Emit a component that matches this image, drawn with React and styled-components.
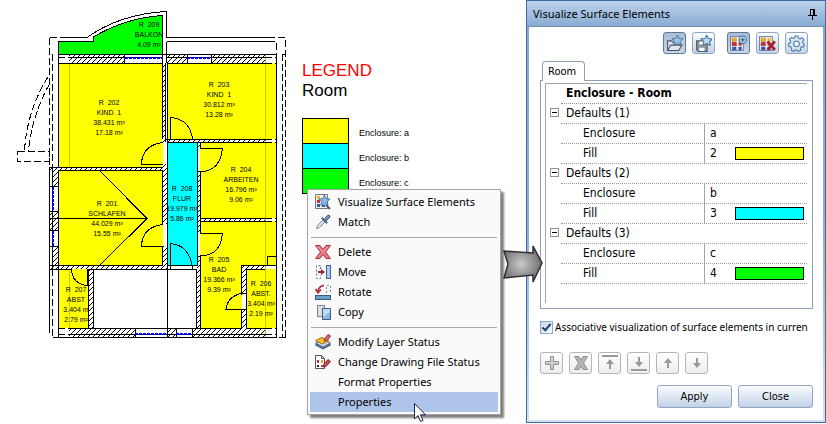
import React, { useState } from "react";
import styled, { createGlobalStyle, css } from "styled-components";

const GlobalStyle = createGlobalStyle`
  *, *::before, *::after { box-sizing: border-box; }
  body { margin: 0; background: #fff; color: #000; font-family: "Noto Sans", "Open Sans", sans-serif; font-size: 11px; }
  button { font: inherit; color: inherit; padding: 0; margin: 0; }
`;

const sans = '"Liberation Sans", Arial, sans-serif';

/* ---------- page ---------- */

const Page = styled.main`
  position: relative;
  display: grid;
  grid-template-columns: 1fr 300px;
  align-items: start;
`;

const Workspace = styled.section`
  position: relative;
  display: flex;
  align-items: flex-start;
  gap: 2px;
`;

/* ---------- floor plan ---------- */

const PlanSvg = styled.svg`
  flex: none;
  display: block;
`;

const RoomText = styled.text`
  font-family: ${sans};
  font-size: 7px;
  text-anchor: middle;
  fill: #000;
`;

const rooms = [
  { x: 149, y: 27, lines: ["R  209", "BALKON", "4.09 m²"] },
  { x: 109, y: 105, lines: ["R  202", "KIND  1", "38.431 m³", "17.18 m²"] },
  { x: 219, y: 87, lines: ["R  203", "KIND  1", "30.812 m³", "13.28 m²"] },
  { x: 107, y: 206, lines: ["R  201", "SCHLAFEN", "44.029 m³", "15.55 m²"] },
  { x: 182, y: 191, lines: ["R  208", "FLUR", "19.979 m³", "5.86 m²"] },
  { x: 241, y: 172, lines: ["R  204", "ARBEITEN", "16.796 m³", "9.06 m²"] },
  { x: 219, y: 262, lines: ["R  205", "BAD", "19.366 m³", "9.39 m²"] },
  { x: 261, y: 286, lines: ["R  206", "ABST.", "3.404 m³", "2.19 m²"] },
  { x: 76, y: 292, lines: ["R  207", "ABST", "3.404 m", "2.79 m²"] },
];

/* x, y, width, height of the hatched wall pieces */
const walls = [
  [69, 54, 56, 9], [167, 54, 20, 9], [211, 54, 54, 9],
  [49, 167, 114, 3], [162, 63, 4, 79], [166, 139, 99, 3],
  [52, 167, 6, 19], [49, 211, 9, 19], [52, 246, 6, 22],
  [49, 265, 118, 4], [162, 164, 5, 60], [162, 246, 5, 20],
  [197, 142, 3, 186], [200, 218, 65, 3], [88, 269, 5, 59],
  [69, 328, 66, 9], [167, 328, 9, 9], [192, 328, 73, 9],
  [241, 265, 24, 4], [241, 269, 5, 24], [241, 309, 5, 19],
];

function FloorPlan() {
  return (
    <PlanSvg width="300" height="350" viewBox="0 0 300 350" role="img" aria-label="Floor plan">
      <defs>
        <pattern id="hatch" width="5" height="5" patternUnits="userSpaceOnUse">
          <rect width="5" height="5" fill="#fff" />
          <path d="M-1 6L6-1M-1 1L1-1M4 6L6 4" stroke="#000" />
        </pattern>
      </defs>
      <g shapeRendering="crispEdges">
        <path fill="#0f0" d="M58 54V41H94V37Q125 18 163 15V54Z" />
        <path fill="#ff0" d="M58 63H163V167H58ZM167 63H277V139H167ZM200 142H277V218H200ZM58 170H163V265H58ZM200 221H277V265H241V328H200ZM58 269H88V328H58ZM246 269H277V328H246Z" />
        <path fill="#0ff" d="M167 142H198V265H167Z" />
        <path stroke="#c9c900" fill="none" d="M69.500 54V167M69.500 269V337M265.500 54V337" />
        {walls.map(([x, y, w, h]) => (
          <rect key={`${x}-${y}`} x={x} y={y} width={w} height={h} fill="url(#hatch)" />
        ))}
        <path fill="#fff" d="M125 55H163V63H125ZM187 55H211V63H187ZM59 55H69V63H59ZM266 55H276V63H266ZM135 329H167V337H135ZM176 329H192V337H176ZM49 186H58V211H49ZM49 230H58V246H49Z" />

        <g fill="none" stroke="#000">
          {/* outer walls */}
          <path d="M58.500 41V167M58.500 170V337M276.500 54V337M58 54.500H277M58 63.500H163M167 63.500H265M58 337.500H277M69 328.500H242M246 328.500H265M125 57.500H163M187 57.500H211M69 57.500H125M167 57.500H187M211 57.500H265M69 334.500H265" />
          {/* balcony */}
          <path d="M65 37.500H87Q120 14 166.500 11.500V37.500H269M58 41.500H93.500V37Q125 18 162.500 15.500V63M166.500 41.500H268M166.500 41.500V63" />
          {/* dashed roof edge */}
          <path strokeDasharray="7 3" d="M49.500 37.500H65M49.500 37.500V167M52.500 54V167M49.500 328V269M52.500 269V337M49.500 328V333M52.500 337.500H58M268 37.500H285.500V337M282.500 54V337M282.500 54.500H285M268 41.500H276.500V54M285.500 337.500H277M58 57.500H69M58 63.500H69M265 57.500H276M265 63.500H276M265 139.500H276M265 142.500H276M265 218.500H276M265 221.500H276M58 328.500H69M58 334.500H69M265 328.500H276M265 334.500H276" />
          <path strokeDasharray="7 3" d="M48 77Q27 110 24.500 151M49.500 84Q32 115 28.500 151M17.500 151.500H49V161.500H17.500Z" />
          {/* inner walls */}
          <path d="M49 167.500H163M58 170.500H163M49.500 167V328M52.500 167V269M49 265.500H163M49 269.500H167M162.500 63V139M165.500 63V142M167.500 63V337M166 139.500H265M167 142.500H265M162.500 170V265M197.500 142V265M196.500 269V328M200.500 142V328M200 218.500H265M200 221.500H265M167 265.500H198M167 269.500H197M88.500 269V328M93.500 269V328M241.500 265V328M246.500 269V328M241 265.500H276M246 269.500H265M135.500 328V337M176.500 328V337M192.500 328V337M124.500 54V63M187.500 54V63M211.500 54V63M49 186.500H58M49 211.500H58M49 230.500H58M49 246.500H58M267.500 265V256.500H276" />
          <path d="M49 218.500H147L99 170M147 218.500L99 266" />
          {/* doors */}
          <path fill="#ff0" d="M163 142.500Q142 145 141.500 164.500H163M163 224.500Q142 227 141.500 246.500H163M170.500 139V117.500Q190 119 192.500 139M200 148.500H222.500Q220 170 203 171.500H200M200 233.500H222.500Q220 255 203 255.500H200M71.500 269Q72 284 87.500 285.500V269M241 293.500Q227 297 226 309.500H246" />
          <path d="M170.500 269V243.500Q190 245 192.500 269" />
          <path d="M200 256.500H197M197 171.500H200M246 293.500H241" />
        </g>
        <path fill="#fff" d="M242 294H246V309H242ZM198 149H200V171H198ZM198 234H200V256H198ZM163 225H167V246H163Z" />
        <path fill="none" stroke="#00f" strokeWidth="2" strokeDasharray="3 1" d="M125 58H163M187 58H211M135 334H167M176 334H192M53 187V211M53 231V246" />
      </g>
      {rooms.map((room) =>
        room.lines.map((line, i) => (
          <RoomText key={room.lines[0] + i} x={room.x} y={room.y + i * 10} xmlSpace="preserve">
            {line}
          </RoomText>
        ))
      )}
    </PlanSvg>
  );
}

/* ---------- legend ---------- */

const LegendBox = styled.section`
  padding-top: 61px;
  font-family: ${sans};
`;

const LegendHeading = styled.h2`
  margin: 0;
  font-size: 17px;
  line-height: 20px;
  font-weight: 400;
  color: ${(p) => p.$color || "#000"};
`;

const LegendList = styled.ul`
  margin: 17px 0 0;
  padding: 0;
  list-style: none;
`;

const LegendItem = styled.li`
  display: flex;
  align-items: center;
  gap: 10px;
  height: 25px;
  font-size: 9px;
  line-height: 25px;
  white-space: nowrap;
`;

const LegendSwatch = styled.span`
  width: 47px;
  height: 26px;
  flex: none;
  align-self: flex-start;
  border: 1px solid #000;
  background: ${(p) => p.$color};
`;

const LegendLabel = styled.span`
  padding-top: 5px;
`;

/* ---------- context menu ---------- */

const Menu = styled.div`
  position: absolute;
  left: 307px;
  top: 189px;
  width: 194px;
  padding: 2px;
  background: #fafafa;
  border: 1px solid #a3a3a3;
  box-shadow: 3px 3px 2px rgba(0, 0, 0, 0.5);
`;

const MenuItem = styled.button`
  display: flex;
  align-items: center;
  gap: 7px;
  width: 100%;
  height: 20px;
  padding-left: 5px;
  border: 0;
  background: ${(p) => (p.$active ? "#aec4ea" : "transparent")};
  line-height: 20px;
  text-align: left;
  white-space: nowrap;
`;

const IconSlot = styled.span`
  display: flex;
  width: 16px;
  height: 16px;
  flex: none;
`;

const MenuRule = styled.hr`
  height: 1px;
  margin: 5px 1px 4px;
  border: 0;
  background: #aaa;
`;

const Cursor = styled.svg`
  position: absolute;
  left: 413px;
  top: 402px;
`;

const FlowArrow = styled.svg`
  position: absolute;
  right: 282px;
  top: 242px;
`;

/* ---------- icons ---------- */

const Icon = ({ children, size = 16 }) => (
  <svg width={size} height={size} viewBox="0 0 16 16" fill="none" aria-hidden="true">
    {children}
  </svg>
);

const STAR = "M8 0L10 4.500L15 5L11.500 8.500L12.500 13L8 10.800L3.500 13L4.500 8.500L1 5L6 4.500Z";
const Swatches = () => (
  <>
    <rect x=".5" y="1.500" width="12" height="13" fill="#f6f8fc" stroke="#7283a0" />
    <path fill="#f9b61b" stroke="#a16c21" strokeWidth=".5" d="M2 3H6V6H2Z" />
    <path fill="#d7263d" stroke="#82172a" strokeWidth=".5" d="M2 7H6V10H2Z" />
    <path fill="#38579f" d="M2 11H6V14H2ZM8 11H11V14H8Z" />
    <path fill="#f9b61b" d="M8 3H11V6H8Z" />
    <path fill="#bd2636" d="M8 7H11V10H8Z" />
  </>
);

const VisualizeIcon = () => (
  <Icon>
    <path d="M.5 .5H12.500V14.500H.5Z" fill="#eef2f9" stroke="#6b7688" />
    <path fill="#f9b61b" d="M2 2H5V5H2Z" />
    <path fill="#d7263d" d="M2 6H5V9H2Z" />
    <path fill="#38579f" d="M2 10H5V13H2ZM7 11H10V13H7Z" />
    <path d="M11 11L15 15" stroke="#555c69" strokeWidth="2" />
    <g transform="translate(3 1) scale(.8)"><path d={STAR} fill="#8db9e4" stroke="#3c638f" /></g>
  </Icon>
);
const MatchIcon = () => (
  <Icon>
    <path d="M1.500 14.500L2.500 11.500L8 6L10 8L4.500 13.500Z" fill="#dce6ee" stroke="#7e8c9b" />
    <path d="M7.500 3.500L12.500 8.500L11.500 9.500L6.500 4.500Z" fill="#4f7095" stroke="#2f4e70" strokeWidth=".7" />
    <path d="M10 4.500L12.500 1.500Q15 .5 15 3L11.500 6.500Z" fill="#7d9fc6" stroke="#2f4e70" />
  </Icon>
);
const DeleteIcon = () => (
  <Icon>
    <path d="M.5 1.500H5L8 5.500L11 1.500H15.500L10.500 8L15.500 14.500H11L8 10.500L5 14.500H.5L5.500 8Z" fill="#ea7a83" stroke="#aa303b" />
    <path d="M3 3L8 8L13 3" stroke="#f5a8ad" />
  </Icon>
);
const MoveIcon = () => (
  <Icon>
    <path d="M5.500 1.500H1.500V14.500H5.500V11M5.500 5V1.500" stroke="#707070" strokeDasharray="2 2" />
    <path d="M3 7H6V5L10 8L6 11V9H3Z" fill="#a51f30" />
    <rect x="11.500" y="1.500" width="4" height="13" fill="#a9cdf0" stroke="#3f638c" />
  </Icon>
);
const RotateIcon = () => (
  <Icon>
    <path d="M11.500 9V1.500H15.500V10" stroke="#888" strokeDasharray="2 2" />
    <path d="M9 1.500Q4 2 3 7M.5 5L3 9L6 5.500" stroke="#b32636" strokeWidth="1.600" />
    <rect x=".5" y="11.500" width="15" height="4" fill="#6d9dcc" stroke="#365b84" />
  </Icon>
);
const CopyIcon = () => (
  <Icon>
    <rect x="2.500" y="1.500" width="7" height="11" fill="#dedede" stroke="#858585" />
    <path d="M7.500 4.500H15.500V15.500H7.500Z" fill="#8cb4dc" stroke="#365f8d" />
    <path d="M8 5H15V8L8 13Z" fill="#c2dbf2" />
  </Icon>
);
const LayersIcon = () => (
  <Icon>
    <path d="M.5 11L8 8L15.500 11L8 15Z" fill="#5e7ea3" stroke="#38536f" />
    <path d="M.5 9L8 6L15.500 9L8 13Z" fill="#d0dceb" stroke="#536d89" />
    <path d="M.5 6.500L7 3.500L14 6.500L7.500 10Z" fill="#fdbd28" stroke="#a96f17" />
    <path d="M9.500 5L13 .5L15.500 2L12 6.500L9 7Z" fill="#df6876" stroke="#912b3b" />
  </Icon>
);
const FileStatusIcon = () => (
  <Icon>
    <path d="M.5 1.500H6.500L9.500 4.500V14.500H.5Z" fill="#fff" stroke="#555" />
    <path d="M6.500 1.500V4.500H9.500" stroke="#555" />
    <path fill="#c93142" d="M2 6H4V9H2Z" /><path fill="#222" d="M2 11H4V13H2Z" /><path fill="#f6a52a" d="M6 6H8V9H6Z" /><path fill="#cf3e32" d="M6 11H8V13H6Z" />
    <path d="M8 13L9 10L13 5.500L15.500 7.500L11.500 12Z" fill="#cc4654" stroke="#872532" />
  </Icon>
);

const OpenFavoriteIcon = () => (
  <Icon size={17}>
    <path d="M1.500 14V5.500H5L6.500 7H12V9" fill="#d8e3ee" stroke="#485568" />
    <g transform="translate(5 0) scale(.72)"><path d={STAR} fill="#9dc6eb" stroke="#45729f" strokeWidth="1.300" /></g>
    <path d="M1.500 14.500L4.500 9.500H15L12 14.500Z" fill="#e2e6e9" stroke="#485568" />
  </Icon>
);
const SaveFavoriteIcon = () => (
  <Icon size={17}>
    <path d="M1.500 5.500H11.500V15.500H3L1.500 14Z" fill="#8a8f98" stroke="#555c67" />
    <path d="M4 6H9V9H4ZM4 12H9V15H4Z" fill="#f5f7fa" />
    <g transform="translate(5 0) scale(.75)"><path d={STAR} fill="#b9dcf8" stroke="#46729d" strokeWidth="1.300" /></g>
  </Icon>
);
const AddRowsIcon = () => (
  <Icon size={17}>
    <Swatches />
    <circle cx="12" cy="4.500" r="3.500" fill="#bad5ef" stroke="#406b99" />
    <path d="M12 2.500V6.500M10 4.500H14" stroke="#31577d" />
  </Icon>
);
const RemoveRowsIcon = () => (
  <Icon size={17}>
    <Swatches />
    <path d="M8 6L15 14M15 6L8 14" stroke="#a81f31" strokeWidth="2.600" />
  </Icon>
);
const GearIcon = () => (
  <Icon size={17}>
    <path d="M6.700 1H9.300L9.800 3L11.400 3.700L13.200 2.600L15 4.700L13.700 6.200L14 7.800L15.500 8.700L14.600 11.200L12.700 11.200L11.600 12.500L11.900 14.500L9.500 15.400L8.300 13.800H6.800L5.500 15.300L3.200 14.200L3.500 12.300L2.500 11L.6 10.700L.5 8L2.200 7.300L2.500 5.700L1.400 4.100L3.200 2.200L5 3.100L6.300 2.700Z" fill="#d5e7f7" stroke="#53789f" />
    <circle cx="8" cy="8.300" r="2.700" fill="#f5f9fc" stroke="#53789f" />
  </Icon>
);

const gray = { fill: "#cfcfcf", stroke: "#929292" };
const editIcons = [
  ["Add", <path key="a" d="M6.500 1.500H9.500V6.500H14.500V9.500H9.500V14.500H6.500V9.500H1.500V6.500H6.500Z" {...gray} />],
  ["Remove", <path key="b" d="M1.500 1.500H6L8 5L10 1.500H14.500L10.500 8L14.500 14.500H10L8 11L6 14.500H1.500L5.500 8Z" fill="#b5b5b5" stroke="#929292" />],
  ["Move to top", <path key="c" d="M0 0H16V2H0ZM8 4L12 9H9V14H7V9H4Z" fill="#999" />],
  ["Move to bottom", <path key="d" d="M0 14H16V16H0ZM7 2H9V7H12L8 12L4 7H7Z" fill="#999" />],
  ["Move up", <path key="e" d="M8 3L12 8H9V13H7V8H4Z" fill="#999" />],
  ["Move down", <path key="f" d="M7 3H9V8H12L8 13L4 8H7Z" fill="#999" />],
];

/* ---------- panel ---------- */

const Panel = styled.aside`
  border: 1px solid #3f6ba3;
  padding: 0 2px 2px;
  background: linear-gradient(#87a9d1, #8fb0d8 55%, #d3e1f1);
`;

const TitleBar = styled.header`
  display: flex;
  align-items: center;
  justify-content: space-between;
  height: 26px;
  margin: 0 -2px;
  padding: 0 8px 0 6px;
  border-bottom: 1px solid #7390b3;
  background: linear-gradient(#bdd3ec, #89abd2);
`;

const Title = styled.h1`
  margin: 0;
  font-size: 11px;
  line-height: 20px;
  font-weight: 400;
`;

const PinButton = styled.button`
  display: flex;
  border: 0;
  background: none;
`;

const PanelBody = styled.div`
  padding: 5px 10px 12px 11px;
  background: #fff;
  font-family: "DejaVu Sans Condensed", "Noto Sans", sans-serif;
  font-size: 12px;
`;

const ButtonRow = styled.div`
  display: flex;
  justify-content: ${(p) => (p.$end ? "flex-end" : "flex-start")};
  gap: 6px;
  padding-right: ${(p) => p.$inset || 0}px;
`;

const ButtonGroup = styled.div`
  display: flex;
  gap: 6px;
  margin-left: 6px;
`;

const controlLook = css`
  border: 1px solid #8fa6c4;
  border-radius: 3px;
  background: linear-gradient(#fbfcfe, #dfe8f3 50%, #c1d1e5);
`;

const ToolButton = styled.button`
  display: flex;
  align-items: center;
  justify-content: center;
  width: 23px;
  height: 22px;
  ${controlLook}
  ${(p) => p.$pressed && css`
    border-color: #5e7899;
    background: linear-gradient(#a9bdd5, #c7d7ea);
  `}
  &:disabled {
    border-color: #b5b5b5;
    background: linear-gradient(#fff, #ededed);
  }
`;

const Tabs = styled.div`
  display: flex;
  margin: 7px 0 -1px 2px;
`;

const Tab = styled.button`
  position: relative;
  height: 20px;
  padding: 0 8px 0 5px;
  border: 1px solid #8d9fb8;
  border-bottom: 0;
  border-radius: 4px 4px 0 0;
  background: #fff;
  font-size: 11px;
  line-height: 18px;
`;

const TabPage = styled.div`
  padding: 2px 5px 5px 4px;
  border: 1px solid #8d9fb8;
`;

const Tree = styled.div`
  display: flow-root;
  padding: 0 0 19px 4px;
  border: solid #a5a5a5;
  border-width: 1px 0 0 1px;
`;

const TreeRow = styled.div`
  display: grid;
  grid-template-columns: 11px 1fr;
  height: 20px;
  line-height: 19px;
`;

const TreeHeading = styled.h2`
  margin: 0;
  padding-left: 5px;
  border-bottom: 1px dotted #999;
  font-size: 12px;
  line-height: 19px;
  font-weight: ${(p) => (p.$strong ? 700 : 400)};
`;

const Expander = styled.button`
  display: flex;
  align-items: center;
  justify-content: center;
  width: 9px;
  height: 9px;
  margin-top: 4px;
  border: 1px solid #929292;
  background: #fff;

  &::before {
    content: "";
    width: 5px;
    height: 1px;
    background: #000;
  }
  &[aria-expanded="false"] {
    box-shadow: inset 0 0 0 1px #ddd;
  }
`;

const Property = styled.div`
  display: grid;
  grid-template-columns: 144px 1fr;
  grid-column: 2;
  border-bottom: 1px dotted #999;
`;

const PropertyName = styled.span`
  padding-left: 22px;
  border-right: 1px solid #a5a5a5;
`;

const PropertyValue = styled.span`
  display: flex;
  align-items: center;
  justify-content: space-between;
  padding: 0 3px 0 5px;
`;

const FillSwatch = styled.span`
  width: 69px;
  height: 13px;
  border: 1px solid #000;
  background: ${(p) => p.$color};
`;

const CheckLabel = styled.label`
  display: flex;
  align-items: center;
  gap: 2px;
  height: 20px;
  margin: 8px 0 15px;
  font-family: "Noto Sans", sans-serif;
  font-size: 10px;
  white-space: nowrap;
`;

const CheckInput = styled.input`
  appearance: none;
  display: flex;
  justify-content: center;
  flex: none;
  width: 13px;
  height: 13px;
  margin: 0;
  border: 1px solid #8fa9c8;
  background: linear-gradient(135deg, #c5d8ee, #f5f9fd);

  &:checked::before {
    content: "";
    width: 5px;
    height: 9px;
    border: solid #1e4273;
    border-width: 0 2px 2px 0;
    transform: rotate(40deg);
  }
`;

const Actions = styled.div`
  display: flex;
  justify-content: flex-end;
  gap: 6px;
  margin-top: 11px;
`;

const PushButton = styled.button`
  width: 75px;
  height: 23px;
  ${controlLook}
  font-size: 11px;
`;

const groups = [
  { name: "Defaults (1)", enclosure: "a", fill: "2", color: "#ff0" },
  { name: "Defaults (2)", enclosure: "b", fill: "3", color: "#0ff" },
  { name: "Defaults (3)", enclosure: "c", fill: "4", color: "#0f0" },
];

function DefaultsGroup({ group }) {
  const [open, setOpen] = useState(true);
  return (
    <>
      <TreeRow>
        <Expander aria-expanded={open} aria-label={group.name} onClick={() => setOpen(!open)} />
        <TreeHeading as="h3">{group.name}</TreeHeading>
      </TreeRow>
      {open && (
        <>
          <TreeRow>
            <Property>
              <PropertyName>Enclosure</PropertyName>
              <PropertyValue>{group.enclosure}</PropertyValue>
            </Property>
          </TreeRow>
          <TreeRow>
            <Property>
              <PropertyName>Fill</PropertyName>
              <PropertyValue>
                {group.fill}
                <FillSwatch $color={group.color} />
              </PropertyValue>
            </Property>
          </TreeRow>
        </>
      )}
    </>
  );
}

function VisualizePanel() {
  const [checked, setChecked] = useState(true);
  return (
    <Panel>
      <TitleBar>
        <Title>Visualize Surface Elements</Title>
        <PinButton aria-label="Pin">
          <svg width="9" height="12" viewBox="0 0 9 12" shapeRendering="crispEdges">
            <path d="M2 1H7V7H9V8H5V12H4V8H0V7H2ZM3 2V7H5V2Z" fill="#000" fillRule="evenodd" />
          </svg>
        </PinButton>
      </TitleBar>
      <PanelBody>
        <ButtonRow $end $inset={5}>
          <ToolButton $pressed aria-label="Open favorite"><OpenFavoriteIcon /></ToolButton>
          <ToolButton aria-label="Save favorite"><SaveFavoriteIcon /></ToolButton>
          <ButtonGroup>
            <ToolButton $pressed aria-label="Add entries"><AddRowsIcon /></ToolButton>
            <ToolButton aria-label="Remove entries"><RemoveRowsIcon /></ToolButton>
            <ToolButton aria-label="Settings"><GearIcon /></ToolButton>
          </ButtonGroup>
        </ButtonRow>
        <Tabs role="tablist">
          <Tab role="tab" aria-selected="true">Room</Tab>
        </Tabs>
        <TabPage role="tabpanel">
          <Tree>
            <TreeRow>
              <span />
              <TreeHeading $strong>Enclosure - Room</TreeHeading>
            </TreeRow>
            {groups.map((group) => <DefaultsGroup key={group.name} group={group} />)}
          </Tree>
        </TabPage>
        <CheckLabel>
          <CheckInput type="checkbox" checked={checked} onChange={(e) => setChecked(e.target.checked)} />
          Associative visualization of surface elements in curren
        </CheckLabel>
        <ButtonRow>
          {editIcons.map(([label, drawing]) => (
            <ToolButton key={label} disabled aria-label={label}>
              <Icon>{drawing}</Icon>
            </ToolButton>
          ))}
        </ButtonRow>
        <Actions>
          <PushButton>Apply</PushButton>
          <PushButton>Close</PushButton>
        </Actions>
      </PanelBody>
    </Panel>
  );
}

const menuSections = [
  [["Visualize Surface Elements", VisualizeIcon], ["Match", MatchIcon]],
  [["Delete", DeleteIcon], ["Move", MoveIcon], ["Rotate", RotateIcon], ["Copy", CopyIcon]],
  [["Modify Layer Status", LayersIcon], ["Change Drawing File Status", FileStatusIcon], ["Format Properties"], ["Properties"]],
];

const legend = [
  ["Enclosure: a", "#ff0"],
  ["Enclosure: b", "#0ff"],
  ["Enclosure: c", "#0f0"],
];

export default function App() {
  return (
    <>
      <GlobalStyle />
      <Page>
        <Workspace>
          <FloorPlan />
          <LegendBox>
            <LegendHeading $color="#f00">LEGEND</LegendHeading>
            <LegendHeading as="h3">Room</LegendHeading>
            <LegendList>
              {legend.map(([label, color]) => (
                <LegendItem key={label}>
                  <LegendSwatch $color={color} />
                  <LegendLabel>{label}</LegendLabel>
                </LegendItem>
              ))}
            </LegendList>
          </LegendBox>
          <Menu role="menu">
            {menuSections.map((items, i) => (
              <React.Fragment key={i}>
                {i > 0 && <MenuRule />}
                {items.map(([label, ItemIcon]) => (
                  <MenuItem key={label} role="menuitem" $active={label === "Properties"}>
                    <IconSlot>{ItemIcon && <ItemIcon />}</IconSlot>
                    {label}
                  </MenuItem>
                ))}
              </React.Fragment>
            ))}
          </Menu>
          <Cursor width="14" height="21" viewBox="0 0 14 21" aria-hidden="true">
            <path d="M1.500 1.500V17L5 13.500L7.500 19.500L10 18.500L7.500 12.800H12.500Z" fill="#fff" stroke="#1c2340" />
          </Cursor>
        </Workspace>
        <VisualizePanel />
        <FlowArrow width="42" height="42" viewBox="0 0 42 42" aria-hidden="true">
          <defs>
            <radialGradient id="metal" cx=".45" cy=".5" r=".6">
              <stop offset="0" stopColor="#c9c9c9" />
              <stop offset="1" stopColor="#666" />
            </radialGradient>
          </defs>
          <path d="M2 9L31 11V4L40 21L31 40V33L2 36L6 22Z" fill="url(#metal)" stroke="#303030" strokeWidth="1.500" />
        </FlowArrow>
      </Page>
    </>
  );
}
